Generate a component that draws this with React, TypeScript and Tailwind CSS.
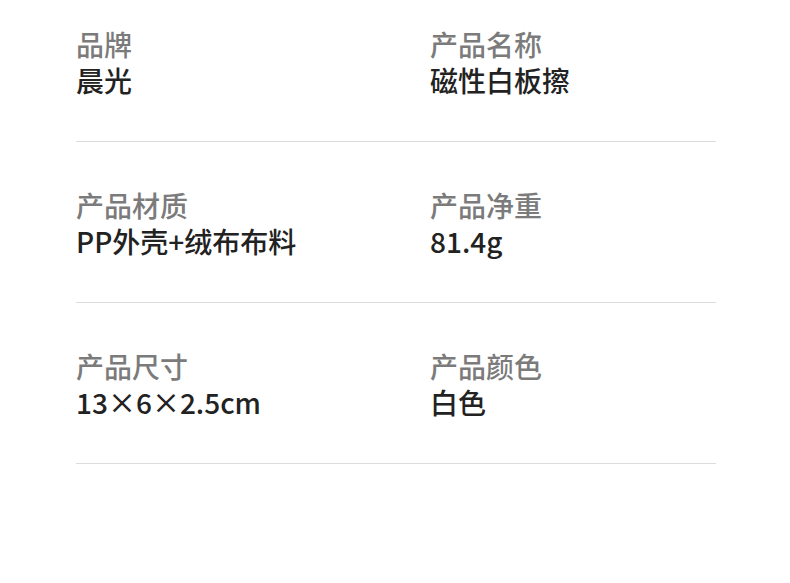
import React from "react";

const rows = [
  [
    { label: "品牌", value: "晨光" },
    { label: "产品名称", value: "磁性白板擦" },
  ],
  [
    { label: "产品材质", value: "PP外壳+绒布布料" },
    { label: "产品净重", value: "81.4g" },
  ],
  [
    { label: "产品尺寸", value: "13×6×2.5cm" },
    { label: "产品颜色", value: "白色" },
  ],
];

export default function App() {
  return (
    <div
      className="w-[790px] h-[583px] bg-white"
      style={{ fontFamily: '"Noto Sans CJK SC", "Noto Sans", sans-serif' }}
    >
      <div className="ml-[76px] w-[640px] pt-[26px]">
        {rows.map((row, i) => (
          <div
            key={i}
            className={`grid grid-cols-[354px_1fr] border-b border-[#dcdcdc] pb-[43px] ${
              i === 0 ? "" : "pt-[45px]"
            }`}
          >
            {row.map((item) => (
              <div key={item.label} className="flex flex-col">
                <span className="text-[28px] leading-[36px] font-medium text-[#7b7b7b]">
                  {item.label}
                </span>
                <span className="text-[28px] leading-[36px] font-medium text-[#222222]">
                  {item.value}
                </span>
              </div>
            ))}
          </div>
        ))}
      </div>
    </div>
  );
}
